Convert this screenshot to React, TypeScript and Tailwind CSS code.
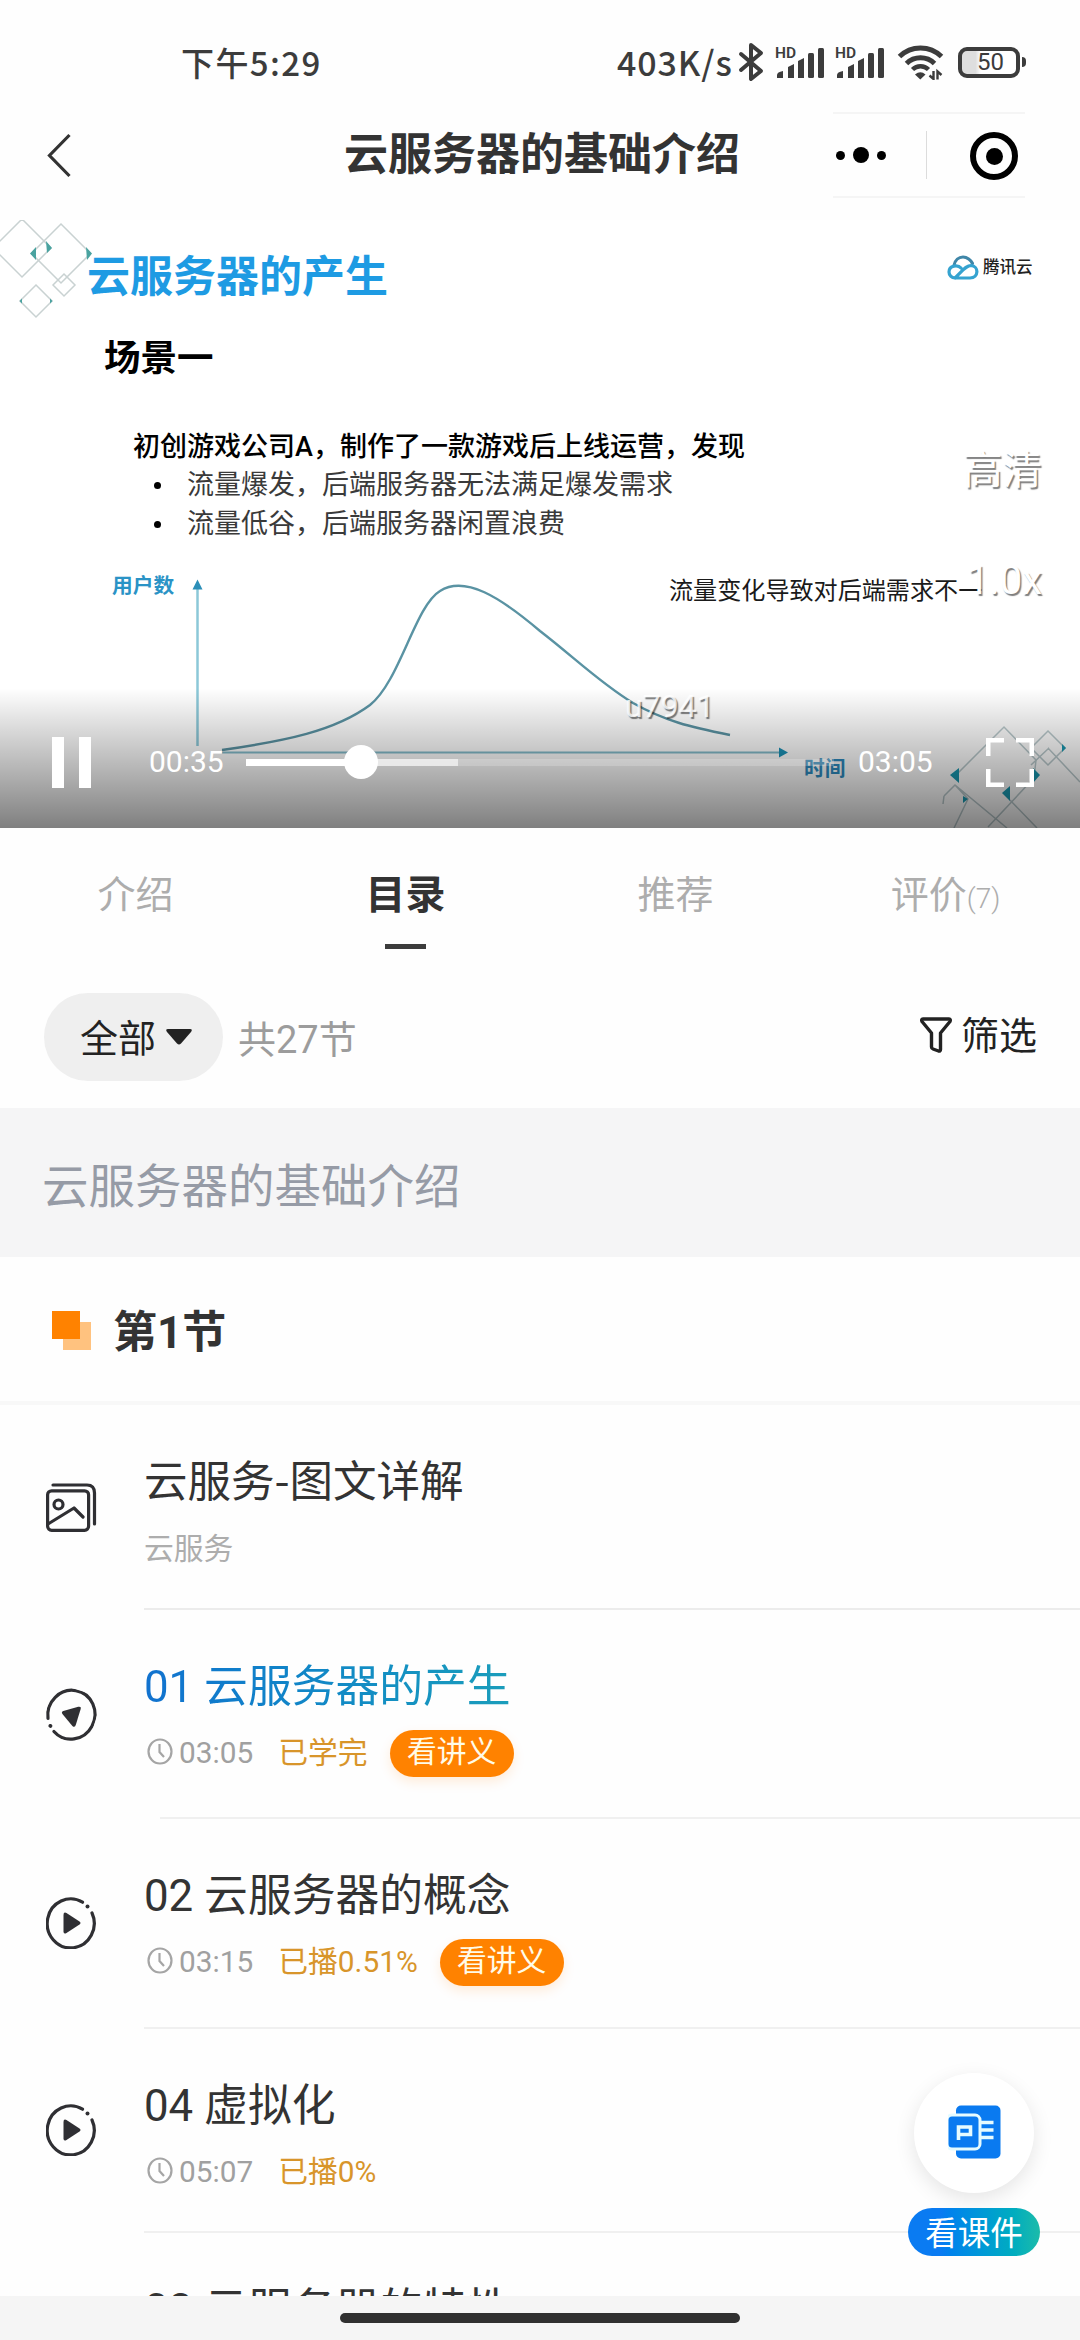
import type { ReactNode } from "react";

type Lesson = {
  title: string;
  duration: string;
  status: string;
  handout?: boolean;
  active?: boolean;
  height: string;
  iconTop: string;
  divider?: string;
};

const lessons: Lesson[] = [
  { title: "01 云服务器的产生", duration: "03:05", status: "已学完", handout: true, active: true, height: "h-[209px]", iconTop: "pt-[79px]", divider: "ml-4" },
  { title: "02 云服务器的概念", duration: "03:15", status: "已播0.51%", handout: true, height: "h-[210px]", iconTop: "pt-[78px]" },
  { title: "04 虚拟化", duration: "05:07", status: "已播0%", height: "h-[204px]", iconTop: "pt-[75px]" },
  { title: "03 云服务器的特性", duration: "04:12", status: "已播0%", height: "h-[209px]", iconTop: "pt-[79px]" },
];

function Signal() {
  return (
    <svg width="50" height="38" viewBox="0 0 50 38" className="shrink-0">
      <text x="0" y="14.5" fontSize="15.5" fontWeight="600" fill="#3c3c3c" fontFamily="Roboto, sans-serif">HD</text>
      <g fill="#3c3c3c">
        <path d="M2 35v-3q0-3 6-4v7z" />
        <path d="M13 35V24l6-3v14z" />
        <path d="M23 35V18l6-3v20z" />
        <rect x="33" y="10" width="6" height="25" rx="1.5" />
        <rect x="43" y="5" width="6" height="30" rx="1.5" />
      </g>
    </svg>
  );
}

function StatusBar() {
  return (
    <div className="flex h-[100px] shrink-0 items-center pt-[24px] pl-[181px] font-['Noto_Sans_CJK_SC',sans-serif] font-medium text-[#3c3c3c]">
      <span className="w-[436px] text-[33px] leading-[40px] tracking-[1.4px]">下午5:29</span>
      <span className="w-[120px] whitespace-nowrap text-[34px] leading-[40px] tracking-[0.9px]">403K/s</span>
      <svg width="28" height="40" viewBox="0 0 28 40" className="shrink-0" fill="none" stroke="#3c3c3c" strokeWidth="4" strokeLinejoin="round" strokeLinecap="round">
        <path d="M4 12l20 17-10 8V3l10 8L4 28" />
      </svg>
      <div className="ml-[10px] flex gap-[10px]">
        <Signal />
        <Signal />
      </div>
      <svg width="48" height="36" viewBox="0 0 48 36" className="ml-[12px] shrink-0" fill="none" stroke="#3c3c3c" strokeWidth="5">
        <path d="M2.500 12.500a30 30 0 0 1 42 0" />
        <path d="M9.500 19.500a20 20 0 0 1 28 0" />
        <path d="M15.500 25.500a11.500 11.500 0 0 1 16 0" strokeWidth="4.500" />
        <path d="M18 30.500q5.500-4.500 10.500 0l-5.200 5z" fill="#3c3c3c" stroke="none" />
        <path d="M36.500 27v8l-4-3.500M40.500 35.500v-8l4 3.500" strokeWidth="2.400" />
      </svg>
      <div className="ml-[13px] flex items-center">
        <div className="flex h-[31px] w-[62px] items-center justify-center rounded-[9px] border-4 border-[#3c3c3c] bg-linear-to-r from-[#dedede] from-25% to-white to-35% pl-[3px] font-['Roboto',sans-serif] text-[24px] leading-none font-normal">50</div>
        <div className="ml-[2px] h-[10px] w-[4px] rounded-r-full bg-[#3c3c3c]" />
      </div>
    </div>
  );
}

function TitleBar() {
  return (
    <div className="flex h-[120px] shrink-0 items-start pt-[12px]">
      <div className="flex h-[86px] w-[344px] items-center pl-[46px]">
        <svg width="26" height="46" viewBox="0 0 26 46" fill="none" stroke="#333" strokeWidth="3.200">
          <path d="M23.500 3L3.500 23.500 23.500 44" />
        </svg>
      </div>
      <h1 className="w-[489px] text-[44px] leading-[86px] font-bold whitespace-nowrap text-[#333]">云服务器的基础介绍</h1>
      <div className="flex h-[86px] w-[192px] items-center border-y-2 border-[#f5f5f5]">
        <div className="flex w-[93px] items-center gap-[8px] pl-[3px]">
          <i className="size-[9px] rounded-full bg-black" />
          <i className="size-[16px] rounded-full bg-black" />
          <i className="size-[9px] rounded-full bg-black" />
        </div>
        <div className="h-[48px] w-px bg-[#dcdcdc]" />
        <div className="mt-[2px] ml-[43px] flex size-[48px] items-center justify-center rounded-full border-[6px] border-black">
          <i className="size-[17px] rounded-full bg-black" />
        </div>
      </div>
    </div>
  );
}

function SlideDrawing() {
  return (
    <svg width="1080" height="608" viewBox="0 0 1080 608" className="absolute inset-0" fill="none">
      <g stroke="#c9d2d2" strokeWidth="1.500">
        <path d="M22-1L51 28 22 57-7 28z" />
        <path d="M61 4l29.500 29.500L61 63 31.500 33.500z" />
        <path d="M64 54l11 11-11 11-11-11z" />
        <path d="M36 65l16 16-16 16-16-16z" />
      </g>
      <g fill="#4aa3a0">
        <path d="M46 21l6 7-5 5zM36 27v13l-6-6.500zM86 27l6 6.500-5 6.500z" />
        <path d="M50 78.500l2.500 2.500-2.500 2.500zM22 78.500v5l-2.500-2.500z" />
      </g>
      <path d="M197.500 368v158" stroke="#8cc8d8" strokeWidth="2.500" />
      <path d="M197.500 359.500l5 10h-10z" fill="#2c8fb8" />
      <path d="M222 532.500h560" stroke="#83bccb" strokeWidth="2.200" />
      <path d="M788 532.500l-9-5v10z" fill="#1c93b8" />
      <path d="M222 530C285 521 335 511 370 485C400 461 415 386 440 371C465 355 500 377 540 411C575 438 600 463 633 483C665 501 690 507 730 515" stroke="#5a93a3" strokeWidth="2.400" />
      <g stroke="#b9c9cc" strokeWidth="1.500">
        <path d="M954 557L1004 507 1036 540 1034 558 988 607" />
        <path d="M1031 528l17-17 17 17-17 17z" />
        <path d="M1048 528l32 34M1031 545l18-17M944 576l11-11 52 43M944 576l-1 8M955 565l13 14-14 29M1010 580l27 28" />
      </g>
      <g fill="#1a9ab2">
        <path d="M950 555l9-7v15z" />
        <path d="M1040 555l-7-7v15z" />
        <path d="M1002 573l8-7v15z" />
        <path d="M1066 528l-4-4v8zM1030 528l4-3v7zM968 579l-5-3v7z" />
      </g>
    </svg>
  );
}

function PlayerControls() {
  return (
    <div className="absolute inset-x-0 bottom-0 h-[140px] bg-linear-to-b from-black/0 to-black/50 text-white">
      <div className="flex h-[148px] items-center pl-[52px]">
        <div className="flex w-[97px] gap-[15px]">
          <i className="h-[51px] w-[12px] bg-white" />
          <i className="h-[51px] w-[12px] bg-white" />
        </div>
        <span className="w-[97px] text-[30px] leading-[40px]">00:35</span>
        <div className="relative flex h-[7px] w-[588px] items-center bg-white/20">
          <div className="h-[7px] w-[115px] bg-white" />
          <div className="h-[7px] w-[97px] bg-white/60" />
          <i className="absolute left-[98px] size-[34px] rounded-full bg-white" />
        </div>
        <span className="ml-[24px] w-[128px] text-[30px] leading-[40px]">03:05</span>
        <svg width="48" height="49" viewBox="0 0 48 49" fill="none" stroke="#fff" strokeWidth="4.500">
          <path d="M2.250 18V2.250H18M30 2.250h15.750V18M45.750 31v15.750H30M18 46.750H2.250V31" />
        </svg>
      </div>
    </div>
  );
}

function Video() {
  return (
    <div className="relative h-[608px] shrink-0 overflow-hidden bg-white">
      <SlideDrawing />
      <div className="relative flex flex-col whitespace-nowrap">
        <div className="mt-[33px] flex h-[48px] items-start pl-[87px]">
          <h2 className="w-[860px] text-[43px] leading-[48px] font-bold text-[#1e9be3]">云服务器的产生</h2>
          <svg width="32" height="25" viewBox="0 0 32 25" className="mt-[2px]" fill="none" strokeWidth="3.200" strokeLinecap="round">
            <path d="M7 10.500C8 5 12 2 16 2s8 3 9.500 6.500" stroke="#3f86a8" />
            <path d="M14 13c-3-3.500-12-3-12 4 0 3 2.500 6 6 6h15c9 0 9-12 1-12.500-5 0-8 5-16 12.500" stroke="#35a3d0" />
          </svg>
          <span className="ml-[4px] text-[16.500px] leading-[29px] font-medium text-[#222]">腾讯云</span>
        </div>
        <h3 className="mt-[38px] pl-[104px] text-[36.500px] leading-[40px] font-bold text-black">场景一</h3>
        <p className="mt-[49px] pl-[133px] text-[27px] leading-[38px] font-medium text-black">初创游戏公司A，制作了一款游戏后上线运营，发现</p>
        <ul className="text-[27px] leading-[39px] text-[#3a3a3a]">
          {["流量爆发，后端服务器无法满足爆发需求", "流量低谷，后端服务器闲置浪费"].map((t) => (
            <li key={t} className="flex items-center pl-[154px]">
              <i className="mr-[26px] size-[7px] rounded-full bg-black" />
              {t}
            </li>
          ))}
        </ul>
        <div className="mt-[32px] flex h-[30px] leading-[30px]">
          <span className="-mt-[5px] w-[558px] pl-[112px] text-[20.700px] font-bold text-[#2a93c6]">用户数</span>
          <span className="pl-[111px] text-[24.100px] text-[#1a1a1a]">流量变化导致对后端需求不一</span>
        </div>
        <span className="mt-[151px] pl-[804px] text-[20.700px] leading-[24px] font-bold text-[#2f8cc0]">时间</span>
      </div>
      <div className="absolute top-[223px] right-[38px] flex flex-col items-end text-white [text-shadow:1.5px_1.5px_1px_rgba(0,0,0,0.5)]">
        <span className="text-[39.500px] leading-[56px]">高清</span>
        <span className="mt-[54px] text-[40px] leading-[56px]">1.0x</span>
      </div>
      <PlayerControls />
      <span className="absolute top-[466px] left-[625px] text-[32px] leading-[40px] text-white/80 [text-shadow:1.5px_1.5px_1px_rgba(0,0,0,0.5)]">u7941</span>
    </div>
  );
}

function Tab({ children, active }: { children: ReactNode; active?: boolean }) {
  return (
    <div className="flex flex-1 flex-col items-center pl-px">
      <div className={active ? "text-[40px] leading-[55px] font-bold text-[#333]" : "text-[38px] leading-[55px] text-[#adadad]"}>{children}</div>
      {active && <div className="mt-[21px] h-[5px] w-[41px] bg-[#3c3c3c]" />}
    </div>
  );
}

function FilterRow() {
  return (
    <div className="flex h-[148px] items-start pt-[33px] text-[38px] leading-[88px]">
      <button className="ml-[44px] flex h-[88px] w-[179px] items-center rounded-full bg-[#efefef] pl-[36px] text-[#222]">
        <span className="pt-[4px]">全部</span>
        <svg width="28" height="18" viewBox="0 0 28 18" className="ml-[9px]" fill="#222">
          <path d="M3 1h22q3 0 1 3L16 15.500q-2 2-4 0L2 4Q0 1 3 1z" />
        </svg>
      </button>
      <span className="ml-[15px] pt-[3px] text-[#9c9c9c]">共27节</span>
      <div className="mr-[43px] ml-auto flex h-[88px] items-center text-[#222]">
        <svg width="34" height="38" viewBox="0 0 34 38" className="-mt-[4px] mr-[8px]" fill="none" stroke="#222" strokeWidth="3.400" strokeLinejoin="round">
          <path d="M4 3h26q2 0 1 2.500L21.500 17v16.500q0 2-2 1.500L14 33q-1.500-.5-1.500-2V17L3 5.500Q2 3 4 3z" />
        </svg>
        <span className="-mt-[3px]">筛选</span>
      </div>
    </div>
  );
}

function PlayIcon({ active }: { active?: boolean }) {
  return (
    <svg width="50" height="52" viewBox="0 0 50 52" className={active ? "rotate-[197deg]" : ""} fill="none">
      <path d="M36.500 5.200A23.500 24.500 0 1 0 46 16" stroke="#2f2f33" strokeWidth="3.200" strokeLinecap="round" />
      <circle cx="41.500" cy="9.500" r="2" fill="#2f2f33" />
      <path d="M17.500 18q0-3.500 3-2l13 8.500q2 1.500 0 3l-13 8.500q-3 1.500-3-1.500z" fill="#2f2f33" />
    </svg>
  );
}

function ArticleRow() {
  return (
    <div className="flex h-[205px] shrink-0">
      <div className="w-[144px] pt-[77px] pl-[45px]">
        <svg width="52" height="52" viewBox="0 0 52 52" fill="none" stroke="#2f2f33" strokeWidth="3.200" strokeLinecap="round" strokeLinejoin="round">
          <rect x="2.600" y="8.800" width="41" height="39.500" rx="4" />
          <path d="M8 3h34q7.500 0 7.500 8v31" />
          <circle cx="13.500" cy="22.500" r="4.500" />
          <path d="M3 42l26-16 9 9" />
        </svg>
      </div>
      <div className="flex flex-1 flex-col pt-[44px]">
        <div className="mb-[3px] font-['Noto_Sans_CJK_SC',sans-serif] text-[43.500px] leading-[60px] text-[#333]">云服务-图文详解</div>
        <div className="mt-[17px] text-[29.800px] leading-[40px] text-[#adadad]">云服务</div>
        <div className="mt-auto h-[2px] bg-[#ececec]" />
      </div>
    </div>
  );
}

function LessonRow({ lesson }: { lesson: Lesson }) {
  return (
    <div className={`flex shrink-0 ${lesson.height}`}>
      <div className={`w-[144px] pl-[46px] ${lesson.iconTop}`}>
        <PlayIcon active={lesson.active} />
      </div>
      <div className="flex flex-1 flex-col pt-[47px]">
        <div className={`self-start text-[43.800px] leading-[60px] ${lesson.active ? "bg-linear-to-r from-[#1272cf] to-[#1b9dbb] bg-clip-text text-transparent" : "text-[#333]"}`}>{lesson.title}</div>
        <div className="mt-[13px] flex h-[46px] items-center text-[29.800px] leading-[46px]">
          <svg width="26" height="27" viewBox="0 0 26 27" className="-mt-[3px] ml-[3px]" fill="none" stroke="#a5a5a5" strokeWidth="2.200">
            <ellipse cx="13" cy="13.500" rx="11.500" ry="12" />
            <path d="M12.500 6v8l4.500 5" />
          </svg>
          <span className="ml-[6px] text-[#a0a0a0]">{lesson.duration}</span>
          <span className="ml-[25px] text-[#d8952a]">{lesson.status}</span>
          {lesson.handout && (
            <span className="mt-px ml-[22px] h-[47px] w-[124px] rounded-full bg-[#ff8200] text-center leading-[43px] text-[#fffbe8] shadow-[0_5px_12px_rgba(255,130,0,0.14)]">看讲义</span>
          )}
        </div>
        <div className={`mt-auto h-[2px] bg-[#f0f0f0] ${lesson.divider ?? ""}`} />
      </div>
    </div>
  );
}

function CoursewareButton() {
  return (
    <div className="absolute top-[2073px] right-[40px] flex w-[132px] flex-col items-center">
      <div className="flex size-[120px] items-center justify-center rounded-full bg-white pb-[3px] shadow-[0_6px_20px_rgba(0,0,0,0.1)]">
        <svg width="53" height="54" viewBox="0 0 53 54">
          <rect x="8" y="0.500" width="44.500" height="53" rx="5" fill="#0a7af0" />
          <path d="M30 17.500h15.500M30 25h15.500M30 32.500h15.500" stroke="#e6fbff" strokeWidth="3.600" />
          <rect x="-1" y="10" width="33" height="34" rx="5" fill="#0a7af0" stroke="#e6fbff" strokeWidth="3" />
          <path d="M10.500 35V22h12v7.500H12" fill="none" stroke="#e6fbff" strokeWidth="3.600" />
        </svg>
      </div>
      <div className="mt-[15px] h-[48px] w-[132px] rounded-full bg-linear-to-r from-[#0a7bf2] from-25% to-[#1bbba9] text-center text-[32.500px] leading-[53px] text-white">看课件</div>
    </div>
  );
}

export default function App() {
  return (
    <div className="relative flex h-[2340px] w-[1080px] flex-col overflow-hidden bg-[#fefefe] font-['Roboto','Noto_Sans_CJK_SC',sans-serif]">
      <StatusBar />
      <TitleBar />
      <Video />
      <div className="flex h-[132px] shrink-0 pt-[40px]">
        <Tab>介绍</Tab>
        <Tab active>目录</Tab>
        <Tab>推荐</Tab>
        <Tab>
          评价<span className="text-[28px] font-light">(7)</span>
        </Tab>
      </div>
      <FilterRow />
      <div className="h-[149px] shrink-0 bg-[#f5f5f6] pt-[47px] pl-[42px] text-[46.500px] leading-[64px] text-[#969ba6]">云服务器的基础介绍</div>
      <div className="flex h-[144px] shrink-0 items-center pt-[3px] pl-[52px]">
        <div className="relative size-[39px]">
          <i className="absolute right-0 bottom-0 size-[28px] bg-[#ffc27f]" />
          <i className="absolute top-0 left-0 size-[28px] bg-[#ff8200]" />
        </div>
        <h2 className="mt-[5px] ml-[22px] text-[44px] leading-[60px] font-bold text-[#333]">第1节</h2>
      </div>
      <div className="h-[4px] shrink-0 bg-[#f8f8f8]" />
      <div className="flex min-h-0 flex-1 flex-col overflow-hidden">
        <ArticleRow />
        {lessons.map((l) => (
          <LessonRow key={l.title} lesson={l} />
        ))}
      </div>
      <div className="flex h-[44px] shrink-0 justify-center bg-[#f5f5f5] pt-[17px]">
        <div className="h-[10px] w-[400px] rounded-full bg-[#303030]" />
      </div>
      <CoursewareButton />
    </div>
  );
}
